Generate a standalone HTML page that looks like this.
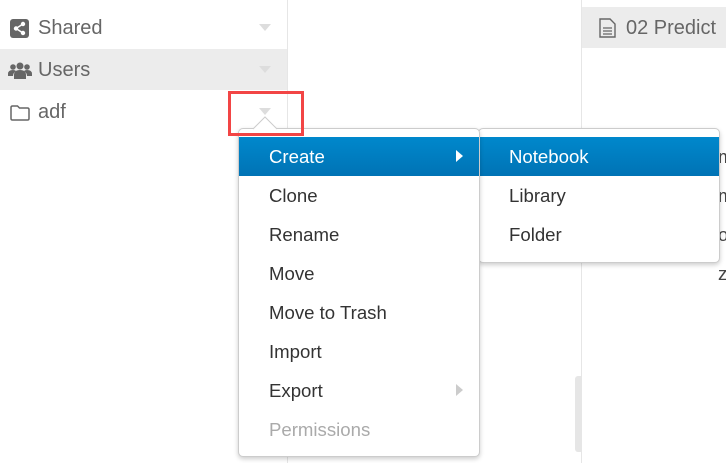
<!DOCTYPE html>
<html><head><style>
body{margin:0;width:726px;height:463px;overflow:hidden;background:#fff;font-family:"Liberation Sans",sans-serif;position:relative}
.abs{position:absolute}
.row{position:absolute;left:0;width:287px;height:41px;font-size:20px;color:#666;line-height:43px}
.row span{position:absolute;left:38px}
.caret{position:absolute;left:259px;top:17px;width:0;height:0;border-left:6px solid transparent;border-right:6px solid transparent;border-top:7px solid #ddd}
.menu{position:absolute;background:#fff;border:1px solid #ccc;border-radius:5px;box-shadow:0 2px 5px rgba(0,0,0,.2)}
.it{position:absolute;left:0;right:0;height:39px;line-height:39px;font-size:18.6px;color:#333}
.hl{background:linear-gradient(#0088cc,#0073b5);color:#fff}
</style></head><body>
<div class="abs" style="left:287px;top:0;width:1px;height:463px;background:#e6e6e6"></div>
<div class="abs" style="left:581px;top:0;width:1px;height:463px;background:#e6e6e6"></div>
<div class="row" style="top:7px"><svg class="abs" style="left:10px;top:12px" width="19" height="19" viewBox="0 0 19 19"><rect width="19" height="19" rx="3" fill="#666"/><circle cx="13" cy="5" r="2.2" fill="#fff"/><circle cx="6" cy="9.5" r="2.2" fill="#fff"/><circle cx="13" cy="14" r="2.2" fill="#fff"/><path d="M13 5L6 9.5L13 14" stroke="#fff" stroke-width="1.5" fill="none"/></svg><span>Shared</span><div class="caret"></div></div>
<div class="row" style="top:49px;background:#ececec"><svg class="abs" style="left:8px;top:13px" width="24" height="18" viewBox="0 0 24 18"><circle cx="12" cy="4" r="3.5" fill="#666"/><circle cx="5" cy="5" r="2.8" fill="#666"/><circle cx="19" cy="5" r="2.8" fill="#666"/><path d="M6 17v-4q0-5 6-5t6 5v4z" fill="#666"/><path d="M0 14v-2q0-4 5-4q2 0 3 1q-3 2-3 5z" fill="#666"/><path d="M24 14v-2q0-4-5-4q-2 0-3 1q3 2 3 5z" fill="#666"/></svg><span>Users</span><div class="caret"></div></div>
<div class="row" style="top:91px"><svg class="abs" style="left:10px;top:14px" width="20" height="16" viewBox="0 0 20 16"><path d="M1 2.5q0-1.5 1.5-1.5h5l2 2h8q1.5 0 1.5 1.5v9q0 1.5-1.5 1.5h-15q-1.5 0-1.5-1.5z" fill="none" stroke="#666" stroke-width="1.5"/></svg><span>adf</span><div class="caret"></div></div>
<div class="abs" style="left:582px;top:7px;width:144px;height:41px;background:#ececec;font-size:20px;color:#666;line-height:43px"><svg class="abs" style="left:17px;top:11px" width="17" height="20" viewBox="0 0 17 20"><path d="M1 1h10l5 5v13h-15z" fill="none" stroke="#666" stroke-width="1.4"/><path d="M4 10h9M4 13h9M4 16h9" stroke="#666" stroke-width="1.3"/></svg><span style="position:absolute;left:44px">02 Predict</span></div>
<div class="abs" style="left:718px;top:137px;font-size:18.6px;color:#444;line-height:39px">m<br>m<br>o<br>ze</div>
<div class="abs" style="left:575px;top:376px;width:7px;height:76px;background:#e6e6e6;border-radius:3px 0 0 3px"></div>
<div class="menu" style="left:478px;top:128px;width:240px;height:133px">
<div class="it hl" style="top:8px"><span style="position:absolute;left:30px">Notebook</span></div>
<div class="it" style="top:47px"><span style="position:absolute;left:30px">Library</span></div>
<div class="it" style="top:86px"><span style="position:absolute;left:30px">Folder</span></div>
</div>
<div class="menu" style="left:238px;top:128px;width:240px;height:327px">
<div class="it hl" style="top:8px"><span style="position:absolute;left:30px">Create</span><div class="abs" style="left:217px;top:13px;border-top:6px solid transparent;border-bottom:6px solid transparent;border-left:7px solid #fff"></div></div>
<div class="it" style="top:47px"><span style="position:absolute;left:30px">Clone</span></div>
<div class="it" style="top:86px"><span style="position:absolute;left:30px">Rename</span></div>
<div class="it" style="top:125px"><span style="position:absolute;left:30px">Move</span></div>
<div class="it" style="top:164px"><span style="position:absolute;left:30px">Move to Trash</span></div>
<div class="it" style="top:203px"><span style="position:absolute;left:30px">Import</span></div>
<div class="it" style="top:242px"><span style="position:absolute;left:30px">Export</span><div class="abs" style="left:217px;top:13px;border-top:6px solid transparent;border-bottom:6px solid transparent;border-left:7px solid #ccc"></div></div>
<div class="it" style="top:281px;color:#aaa"><span style="position:absolute;left:30px">Permissions</span></div>
</div>
<svg class="abs" style="left:253px;top:116px" width="24" height="14"><path d="M0 13L12 1L24 13" fill="#fff" stroke="#ccc"/></svg>
<div class="abs" style="left:228px;top:91px;width:70px;height:39px;border:3px solid #f24545"></div>
</body></html>
